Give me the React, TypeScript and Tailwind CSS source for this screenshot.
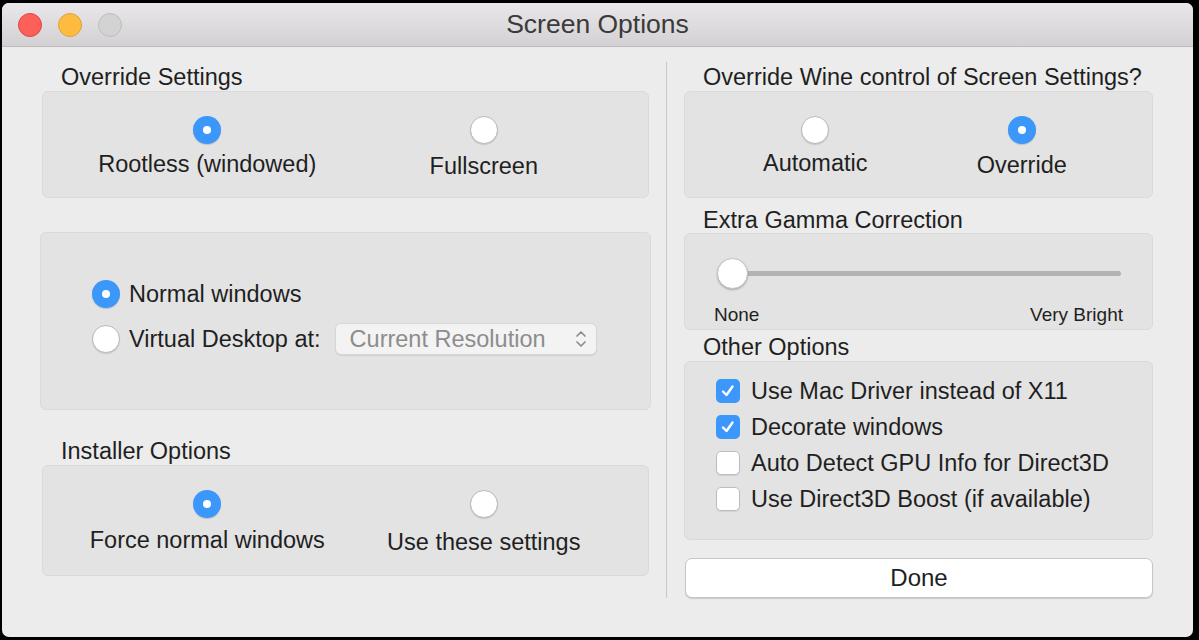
const font = "font-['Liberation_Sans',Arial,sans-serif]";

function Radio({ checked }: { checked?: boolean }) {
  if (checked) {
    return (
      <span className="flex h-[28px] w-[28px] shrink-0 items-center justify-center rounded-full bg-[#3b97f9] shadow-[0_1px_1px_rgba(0,0,0,0.15)]">
        <span className="h-[8px] w-[8px] rounded-full bg-white" />
      </span>
    );
  }
  return (
    <span className="block h-[28px] w-[28px] shrink-0 rounded-full border border-[#b9b9b9] bg-white shadow-[0_1px_1px_rgba(0,0,0,0.12)]" />
  );
}

function Checkbox({ checked }: { checked?: boolean }) {
  if (checked) {
    return (
      <span className="flex h-[24px] w-[24px] shrink-0 items-center justify-center rounded-[5px] bg-[#3b97f9]">
        <svg width="24" height="24" viewBox="0 0 24 24" fill="none">
          <path d="M7 12.5 L10.5 16 L16.5 7.5" stroke="white" strokeWidth="2.4" strokeLinecap="round" strokeLinejoin="round" />
        </svg>
      </span>
    );
  }
  return (
    <span className="block h-[24px] w-[24px] shrink-0 rounded-[5px] border border-[#bdbdbd] bg-white shadow-[0_1px_1px_rgba(0,0,0,0.08)]" />
  );
}

function Label({ children, className = "" }: { children: React.ReactNode; className?: string }) {
  return <div className={`h-[26px] text-[23.5px] leading-[26px] text-[#1f1f1f] ${className}`}>{children}</div>;
}

const box = "rounded-[6px] border border-[#dadada] bg-[#e3e3e3]";

function ChoicePair({
  items,
}: {
  items: { label: string; checked?: boolean; offset: string }[];
}) {
  return (
    <div className="grid grid-cols-2 px-[26px] pt-[24px]">
      {items.map((it) => (
        <div key={it.label} className="flex flex-col items-center">
          <Radio checked={it.checked} />
          <Label className={it.offset}>{it.label}</Label>
        </div>
      ))}
    </div>
  );
}

const options = [
  { label: "Use Mac Driver instead of X11", checked: true },
  { label: "Decorate windows", checked: true },
  { label: "Auto Detect GPU Info for Direct3D", checked: false },
  { label: "Use Direct3D Boost (if available)", checked: false },
];

export default function App() {
  return (
    <div className={`h-[640px] w-[1199px] bg-black pb-[3px] pl-[2px] pr-[6px] pt-[3px] ${font}`}>
      <div className="flex h-full flex-col overflow-hidden rounded-[7px] bg-[#ececec]">
        {/* title bar */}
        <div className="relative flex h-[44px] shrink-0 items-center border-b border-[#bcbcbc] bg-gradient-to-b from-[#e9e7e9] to-[#d3d1d3]">
          <div className="flex gap-[16px] pl-[16px]">
            <span className="h-[24px] w-[24px] rounded-full border border-[#e0443e] bg-[#fd605b]" />
            <span className="h-[24px] w-[24px] rounded-full border border-[#dea236] bg-[#fdbc40]" />
            <span className="h-[24px] w-[24px] rounded-full border border-[#bdbdbd] bg-[#d3d3d3]" />
          </div>
          <div className="absolute inset-x-0 top-0 flex h-[43px] items-center justify-center text-[26.5px] text-[#3a3a3a]">
            Screen Options
          </div>
        </div>

        <div className="flex pl-[38px]">
          {/* left column */}
          <div className="flex w-[611px] flex-col">
            <Label className="mt-[17px] pl-[21px]">Override Settings</Label>
            <div className={`mx-[2px] mt-[1px] h-[107px] ${box}`}>
              <ChoicePair
                items={[
                  { label: "Rootless (windowed)", checked: true, offset: "mt-[7px]" },
                  { label: "Fullscreen", offset: "mt-[9px]" },
                ]}
              />
            </div>

            <div className={`mt-[34px] flex h-[178px] flex-col gap-[9px] pl-[51px] pt-[43px] ${box}`}>
              <div className="flex h-[36px] items-center gap-[9px]">
                <Radio checked />
                <Label>Normal windows</Label>
              </div>
              <div className="flex h-[36px] items-center gap-[9px]">
                <Radio />
                <Label>Virtual Desktop at:</Label>
                <div className="ml-[5px] flex h-[32px] w-[262px] items-center justify-between rounded-[6px] border border-[#d6d6d6] bg-[#f3f3f3] pl-[14px] pr-[8px] shadow-[0_1px_1px_rgba(0,0,0,0.08)]">
                  <span className="text-[23.5px] leading-[26px] text-[#8d8d8d]">Current Resolution</span>
                  <svg width="14" height="24" viewBox="0 0 14 24" fill="none">
                    <path d="M3 9 L7 5 L11 9" stroke="#8d8d8d" strokeWidth="1.7" strokeLinecap="round" strokeLinejoin="round" />
                    <path d="M3 15 L7 19 L11 15" stroke="#8d8d8d" strokeWidth="1.7" strokeLinecap="round" strokeLinejoin="round" />
                  </svg>
                </div>
              </div>
            </div>

            <Label className="mt-[28px] pl-[21px]">Installer Options</Label>
            <div className={`mx-[2px] mt-[1px] h-[111px] ${box}`}>
              <ChoicePair
                items={[
                  { label: "Force normal windows", checked: true, offset: "mt-[9px]" },
                  { label: "Use these settings", offset: "mt-[11px]" },
                ]}
              />
            </div>
          </div>

          {/* divider */}
          <div className="ml-[15px] mt-[15px] h-[536px] w-px bg-[#c8c8c8]" />

          {/* right column */}
          <div className="ml-[17px] flex w-[469px] flex-col">
            <Label className="mt-[17px] pl-[19px]">Override Wine control of Screen Settings?</Label>
            <div className={`mt-[1px] h-[107px] ${box}`}>
              <div className="grid grid-cols-2 px-[27px] pt-[24px]">
                <div className="flex flex-col items-center">
                  <Radio />
                  <Label className="mt-[6px]">Automatic</Label>
                </div>
                <div className="flex flex-col items-center">
                  <Radio checked />
                  <Label className="mt-[8px]">Override</Label>
                </div>
              </div>
            </div>

            <Label className="mt-[9px] pl-[19px]">Extra Gamma Correction</Label>
            <div className={`h-[97px] pt-[24px] ${box}`}>
              <div className="relative ml-[32px] h-[31px] w-[404px]">
                <div className="absolute left-0 right-0 top-[13px] h-[5px] rounded-full bg-[#b3b3b3]" />
                <div className="absolute left-0 top-0 h-[31px] w-[31px] rounded-full border border-[#c4c4c4] bg-white shadow-[0_1px_2px_rgba(0,0,0,0.25)]" />
              </div>
              <div className="mt-[15px] flex justify-between px-[29px] text-[19px] leading-[22px] text-[#1f1f1f]">
                <span>None</span>
                <span>Very Bright</span>
              </div>
            </div>

            <Label className="mt-[4px] pl-[19px]">Other Options</Label>
            <div className={`mt-[1px] h-[179px] pl-[31px] pt-[11px] ${box}`}>
              {options.map((o) => (
                <div key={o.label} className="flex h-[36px] items-center gap-[11px]">
                  <Checkbox checked={o.checked} />
                  <Label>{o.label}</Label>
                </div>
              ))}
            </div>

            <button className="ml-[1px] mt-[18px] flex h-[40px] items-center justify-center rounded-[7px] border border-[#c6c6c6] bg-white text-[24px] text-[#1f1f1f] shadow-[0_1px_1px_rgba(0,0,0,0.15)]">
              Done
            </button>
          </div>
        </div>
      </div>
    </div>
  );
}
